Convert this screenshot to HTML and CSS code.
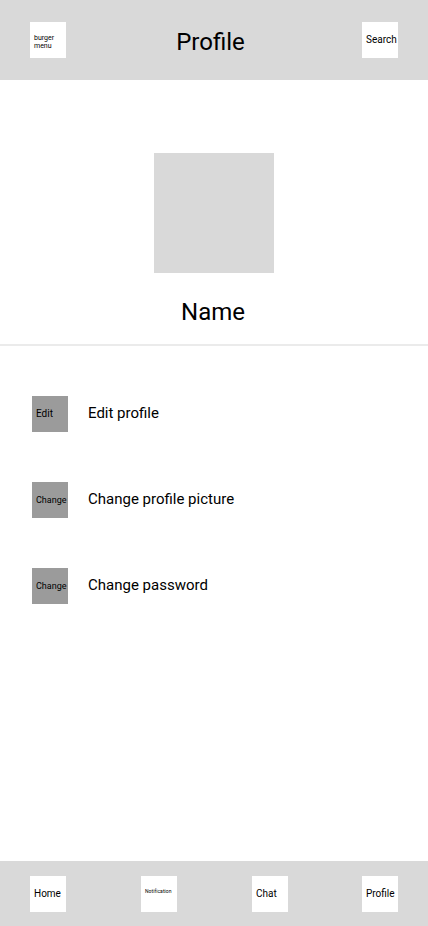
FILE: index.html
```html
<!DOCTYPE html>
<html lang="en">
<head>
<meta charset="utf-8">
<title>Profile</title>
<link rel="stylesheet" href="styles.css">
</head>
<body>
<div class="screen">
  <header class="topbar">
    <button class="tile tile-menu">burger<br>menu</button>
    <h1 class="title">Profile</h1>
    <button class="tile">Search</button>
  </header>
  <main class="content">
    <section class="identity">
      <div class="avatar"></div>
      <h2 class="name">Name</h2>
    </section>
    <ul class="actions">
      <li class="action"><span class="icon icon-edit">Edit</span><span class="label">Edit profile</span></li>
      <li class="action"><span class="icon">Change</span><span class="label">Change profile picture</span></li>
      <li class="action"><span class="icon">Change</span><span class="label">Change password</span></li>
    </ul>
  </main>
  <nav class="tabbar">
    <a class="tile">Home</a>
    <a class="tile tile-notification">Notification</a>
    <a class="tile">Chat</a>
    <a class="tile">Profile</a>
  </nav>
</div>
</body>
</html>
```

FILE: styles.css
```css
* {
  box-sizing: border-box;
}

body {
  margin: 0;
  background: #fff;
  color: #000;
  font-family: Roboto, sans-serif;
}

.screen {
  display: flex;
  flex-direction: column;
  width: 428px;
  height: 926px;
}

.topbar,
.tabbar {
  flex: none;
  background: #d9d9d9;
}

.topbar {
  display: flex;
  justify-content: space-between;
  height: 80px;
  padding: 22px 30px;
}

.tabbar {
  display: grid;
  grid-template-columns: 111px 111px 110px 36px;
  height: 65px;
  padding: 15px 30px;
}

.tile {
  flex: none;
  width: 36px;
  height: 36px;
  padding: 0 0 0 4px;
  border: 0;
  background: #fff;
  color: #000;
  font: 10px/36px Roboto, sans-serif;
  text-align: left;
  white-space: nowrap;
}

.tile-menu {
  padding-top: 4px;
  font-size: 7px;
  line-height: 8px;
}

.tile-notification {
  font-size: 5px;
  line-height: 31px;
  letter-spacing: 0.04px;
}

.title,
.name {
  margin: 0;
  font-size: 24px;
  font-weight: 400;
  line-height: 28px;
}

.title {
  padding-top: 6px;
  margin-right: 7px;
}

.content {
  flex: 1;
}

.identity {
  display: flex;
  flex-direction: column;
  align-items: center;
  height: 266px;
  padding-top: 73px;
  border-bottom: 2px solid #ebebeb;
}

.avatar {
  width: 120px;
  height: 120px;
  background: #d9d9d9;
}

.name {
  margin: 25px 2px 0 0;
}

.actions {
  display: grid;
  gap: 50px;
  margin: 0;
  padding: 50px 32px;
  list-style: none;
}

.action {
  display: flex;
  gap: 20px;
  height: 36px;
}

.icon {
  width: 36px;
  padding-left: 4px;
  background: #9b9b9b;
  font-size: 9px;
  line-height: 36px;
}

.icon-edit {
  font-size: 10px;
}

.label {
  font-size: 15px;
  line-height: 34px;
}
```
